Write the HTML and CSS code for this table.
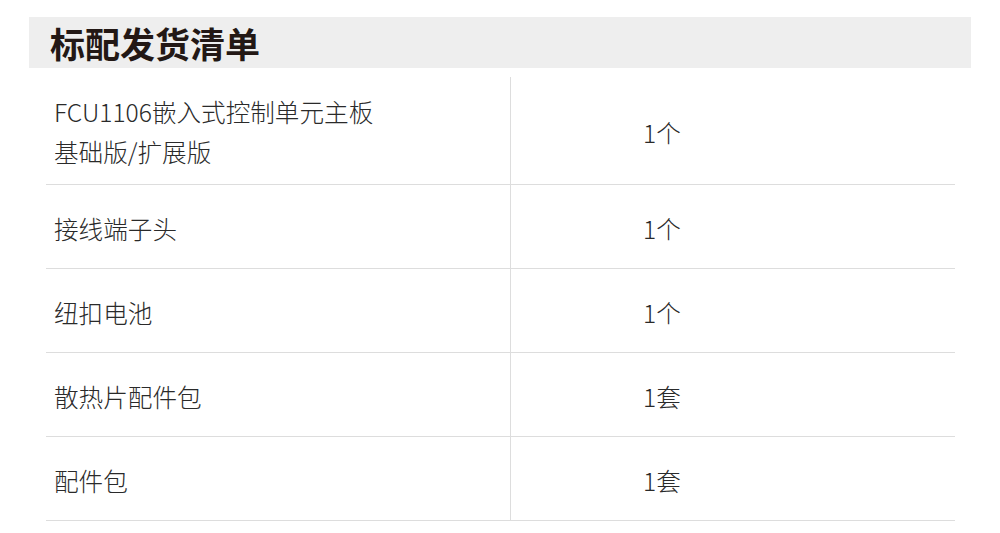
FILE: index.html
```html
<!DOCTYPE html>
<html lang="zh-CN">
<head>
<meta charset="utf-8">
<title>标配发货清单</title>
<link rel="stylesheet" href="styles.css">
</head>
<body>
<div class="page">
  <div class="header"><h1 class="title">标配发货清单</h1></div>
  <div class="list">
    <div class="row row-tall">
      <div class="name">FCU1106嵌入式控制单元主板<br>基础版/扩展版</div>
      <div class="qty">1个</div>
    </div>
    <div class="row">
      <div class="name">接线端子头</div>
      <div class="qty">1个</div>
    </div>
    <div class="row">
      <div class="name">纽扣电池</div>
      <div class="qty">1个</div>
    </div>
    <div class="row">
      <div class="name">散热片配件包</div>
      <div class="qty">1套</div>
    </div>
    <div class="row">
      <div class="name">配件包</div>
      <div class="qty">1套</div>
    </div>
  </div>
</div>
</body>
</html>
```

FILE: styles.css
```css
html, body {
  margin: 0;
  padding: 0;
  background: #ffffff;
}
body {
  font-family: "Noto Sans CJK SC", "Noto Sans", sans-serif;
  color: #2a2a2a;
}
.page {
  padding-top: 17px;
}
.header {
  margin-left: 29px;
  width: 942px;
  height: 51px;
  background: #eeeeee;
  display: flex;
  align-items: center;
}
.title {
  margin: 0 0 0 21px;
  font-size: 35px;
  font-weight: 700;
  color: #231815;
  line-height: 1;
}
.list {
  margin-top: 9px;
  margin-left: 46px;
  width: 909px;
}
.row {
  display: grid;
  grid-template-columns: 465px 1fr;
  height: 84px;
  border-bottom: 1px solid #dddddd;
  box-sizing: border-box;
}
.row-tall {
  height: 108px;
}
.name {
  display: flex;
  align-items: center;
  padding-left: 8px;
  padding-top: 3px;
  font-size: 24.6px;
  font-weight: 300;
  line-height: 40px;
  border-right: 1px solid #dddddd;
}
.row-tall .name {
  padding-top: 0;
}
.qty {
  display: flex;
  align-items: center;
  padding-left: 132px;
  padding-top: 3px;
  font-size: 24.6px;
  font-weight: 300;
}
```
